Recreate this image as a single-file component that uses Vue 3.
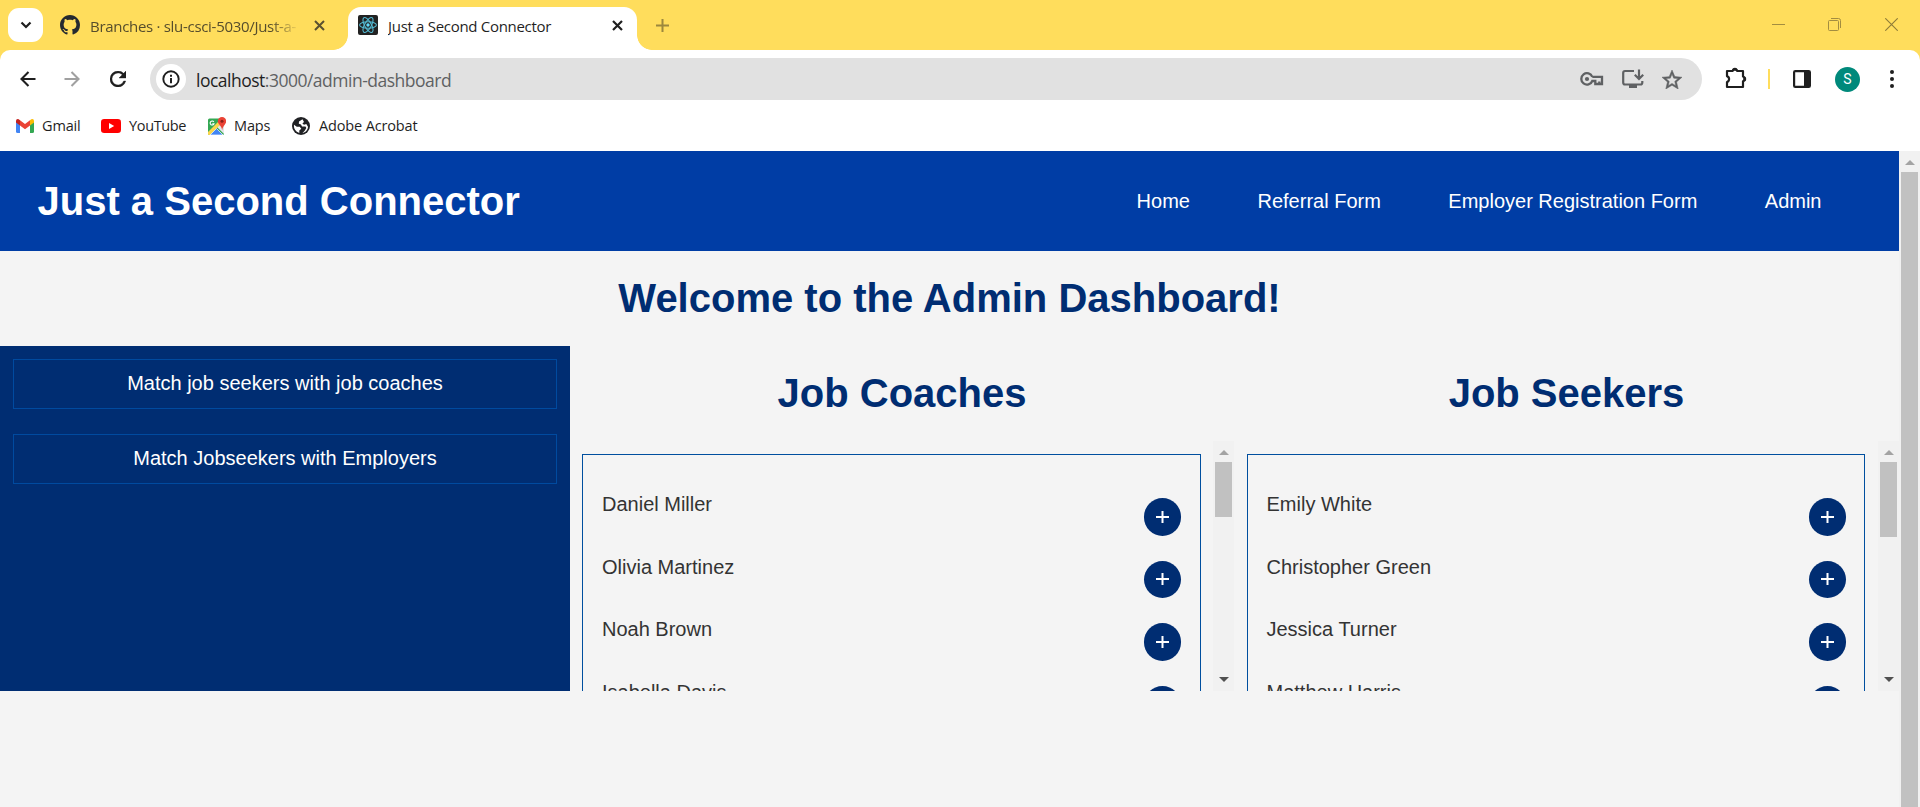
<script setup>
const navLinks = ['Home', 'Referral Form', 'Employer Registration Form', 'Admin']
const actions = ['Match job seekers with job coaches', 'Match Jobseekers with Employers']
const panels = [
  { title: 'Job Coaches', kind: 'coaches', people: ['Daniel Miller', 'Olivia Martinez', 'Noah Brown', 'Isabella Davis'] },
  { title: 'Job Seekers', kind: 'seekers', people: ['Emily White', 'Christopher Green', 'Jessica Turner', 'Matthew Harris'] },
]
</script>

<template>
  <div class="window">
    <div class="tabstrip">
      <div class="tabsearch">
        <svg width="12" height="8" viewBox="0 0 12 8"><path d="M1.5 1.5 6 6l4.5-4.5" fill="none" stroke="#1f1f1f" stroke-width="2.2" /></svg>
      </div>
      <div class="tab">
        <svg width="20" height="20" viewBox="0 0 16 16"><path fill="#24292f" d="M8 0C3.58 0 0 3.58 0 8c0 3.54 2.29 6.53 5.47 7.59.4.07.55-.17.55-.38 0-.19-.01-.82-.01-1.49-2.01.37-2.53-.49-2.69-.94-.09-.23-.48-.94-.82-1.13-.28-.15-.68-.52-.01-.53.63-.01 1.08.58 1.23.82.72 1.21 1.87.87 2.33.66.07-.52.28-.87.51-1.07-1.78-.2-3.64-.89-3.64-3.95 0-.87.31-1.59.82-2.15-.08-.2-.36-1.02.08-2.12 0 0 .67-.21 2.2.82.64-.18 1.32-.27 2-.27s1.36.09 2 .27c1.53-1.04 2.2-.82 2.2-.82.44 1.1.16 1.92.08 2.12.51.56.82 1.27.82 2.15 0 3.07-1.87 3.75-3.65 3.95.29.25.54.73.54 1.48 0 1.07-.01 1.93-.01 2.2 0 .21.15.46.55.38A8.01 8.01 0 0 0 16 8c0-4.42-3.58-8-8-8z" /></svg>
        <span class="tab-title faded">Branches · slu-csci-5030/Just-a-</span>
        <svg class="x" width="11" height="11" viewBox="0 0 11 11"><path d="m1 1 9 9M10 1l-9 9" stroke="#5b5130" stroke-width="2" /></svg>
      </div>
      <div class="tab active">
        <svg width="20" height="20" viewBox="0 0 20 20">
          <rect width="20" height="20" rx="2" fill="#222" />
          <g fill="none" stroke="#53b9d1" stroke-width="1.1">
            <ellipse cx="10" cy="10" rx="8.4" ry="3.3" />
            <ellipse cx="10" cy="10" rx="8.4" ry="3.3" transform="rotate(60 10 10)" />
            <ellipse cx="10" cy="10" rx="8.4" ry="3.3" transform="rotate(120 10 10)" />
          </g>
          <circle cx="10" cy="10" r="1.7" fill="#61dafb" />
        </svg>
        <span class="tab-title">Just a Second Connector</span>
        <svg class="x" width="11" height="11" viewBox="0 0 11 11"><path d="m1 1 9 9M10 1l-9 9" stroke="#1f1f1f" stroke-width="2.2" /></svg>
      </div>
      <svg class="newtab" width="13" height="13" viewBox="0 0 13 13"><path d="M6.5 0v13M0 6.5h13" stroke="#9c883d" stroke-width="2" /></svg>
      <div class="controls">
        <svg width="13" height="13" viewBox="0 0 13 13"><path d="M0 6.5h13" stroke="#a38d40" /></svg>
        <svg width="13" height="13" viewBox="0 0 13 13" fill="none" stroke="#a38d40"><rect x=".5" y="2.5" width="10" height="10" rx="1" /><path d="M3 .5h7.5a2 2 0 0 1 2 2V10" /></svg>
        <svg width="13" height="13" viewBox="0 0 13 13"><path d="m.3.3 12.4 12.4M12.7.3.3 12.7" stroke="#8e7b38" stroke-width="1.1" /></svg>
      </div>
    </div>

    <div class="chrome">
      <div class="toolbar">
        <svg class="back" width="16" height="16" viewBox="0 0 16 16"><path d="M15.5 8H1.8M8.5 1 1.5 8l7 7" fill="none" stroke="#1f1f1f" stroke-width="2.1" /></svg>
        <svg class="fwd" width="16" height="16" viewBox="0 0 16 16"><path d="M.5 8h13.7M7.5 1l7 7-7 7" fill="none" stroke="#a0a0a0" stroke-width="2.1" /></svg>
        <svg class="reload" width="16" height="16" viewBox="4 4 16 16"><path fill="#1f1f1f" stroke="#1f1f1f" stroke-width=".4" d="M17.650 6.350A7.960 7.960 0 0 0 12 4a8 8 0 1 0 7.730 10h-2.080A6 6 0 1 1 12 6c1.660 0 3.140.69 4.220 1.780L13 11h7V4z" /></svg>
        <div class="omnibox">
          <div class="info">
            <svg width="18" height="18" viewBox="0 0 18 18"><circle cx="9" cy="9" r="7.7" fill="none" stroke="#1f1f1f" stroke-width="1.9" /><path d="M9 8v5.2M9 4.7v2" stroke="#1f1f1f" stroke-width="2" /></svg>
          </div>
          <span class="url"><b>localhost</b>:3000/admin-dashboard</span>
          <div class="omni-icons">
            <svg width="24" height="14" viewBox="0 0 24 14" fill="none" stroke="#5f6163" stroke-width="2.3"><path d="M12.3 4.8A5.7 5.7 0 1 0 12.3 9H15.3V12h4V9.5M12.3 4.8H22V12h-3" /><circle cx="7" cy="7" r="2.1" fill="#5f6163" stroke="none" /></svg>
            <svg width="22" height="20" viewBox="0 0 22 20" fill="none" stroke="#5f6163" stroke-width="2.2"><path d="M12 2H3Q1.2 2 1.2 4v9.500Q1.200 15.500 3 15.500H18.500Q20.300 15.500 20.300 13.500V12M17 .5v9M12.800 5.800 17 10l4.200-4.200" /><path d="M7 16h8v3H7z" fill="#5f6163" stroke="none" /></svg>
            <svg width="20" height="19" viewBox="2 2 20 19"><path fill="#5f6163" stroke="#5f6163" stroke-width=".5" d="m22 9.240-7.190-.62L12 2 9.190 8.630 2 9.240l5.460 4.730L5.820 21 12 17.270 18.180 21l-1.630-7.030L22 9.240zM12 15.400l-3.760 2.270 1-4.280-3.320-2.880 4.380-.38L12 6.100l1.710 4.040 4.380.38-3.320 2.880 1 4.280L12 15.400z" /></svg>
          </div>
        </div>
        <svg class="puzzle" width="22" height="22" viewBox="0 0 22 22"><path d="M2 4h5.500a2.600 2.600 0 0 1 4.800 0H18v5.500a2.600 2.600 0 0 1 0 4.800V20H2v-4.900a3.200 3.200 0 0 0 0-6z" fill="none" stroke="#1f1f1f" stroke-width="2.200" stroke-linejoin="round" /><path d="M7.200 3.500a2.700 2.700 0 0 1 5.400 0zM18.500 9.300a2.700 2.700 0 0 1 0 5.400z" fill="#1f1f1f" /></svg>
        <i class="divider"></i>
        <svg class="side" width="18" height="18" viewBox="0 0 18 18"><rect x="1.100" y="1.100" width="15.800" height="15.800" rx="1.200" fill="none" stroke="#1f1f1f" stroke-width="2.200" /><path d="M11 1h6v16h-6z" fill="#1f1f1f" /></svg>
        <div class="avatar">S</div>
        <svg class="dots" width="4" height="18" viewBox="0 0 4 18" fill="#1f1f1f"><circle cx="2" cy="2" r="2" /><circle cx="2" cy="9" r="2" /><circle cx="2" cy="16" r="2" /></svg>
      </div>
      <div class="bookmarks">
        <span class="bm gmail">
          <svg width="18" height="14" viewBox="0 0 18 14"><path d="M0 2.500V12.500Q0 14 1.500 14H4V5z" fill="#4285f4" /><path d="M18 2.500V12.500Q18 14 16.500 14H14V5z" fill="#34a853" /><path d="M14 1.200V6.500L18 3.500V2Q18 0 16.300 0 15.500 0 14 1.200z" fill="#fbbc04" /><path d="M0 2Q0 0 1.700 0 2.500 0 4 1.200V6.500L0 3.500z" fill="#c5221f" /><path d="M4 1.200 9 5l5-3.800v5.300L9 10.200 4 6.500z" fill="#ea4335" /></svg>
          <span>Gmail</span>
        </span>
        <span class="bm youtube">
          <svg width="20" height="14" viewBox="0 0 20 14"><rect width="20" height="14" rx="3.200" fill="#f00" /><path d="m8 4 5.200 3L8 10z" fill="#fff" /></svg>
          <span>YouTube</span>
        </span>
        <span class="bm maps">
          <svg width="18" height="18" viewBox="0 0 18 18"><rect y="1.500" width="16" height="16.500" rx="1.500" fill="#34a853" /><path d="M16 5v12L9 10z" fill="#e4e6e8" /><path d="M0 15 12 3l3 2L1.800 18H1Q0 18 0 17z" fill="#fbd54b" /><path d="m8.500 11.500 6.500 6.500H2z" fill="#4285f4" stroke="#fff" stroke-width=".7" /><path d="M5.800 4.900A2 2 0 1 0 6 6.800H4.300" fill="none" stroke="#fff" stroke-width="1.100" /><path d="M14 0a4.200 4.200 0 0 1 4.200 4.200c0 3-3.500 4.300-4 9-.5-4.700-4.400-6-4.400-9A4.200 4.200 0 0 1 14 0z" fill="#ea4335" /><circle cx="14" cy="4.200" r="1.500" fill="#8c1f17" /></svg>
          <span>Maps</span>
        </span>
        <span class="bm adobe">
          <svg width="18" height="18" viewBox="0 0 18 18"><circle cx="9" cy="9" r="9" fill="#202124" /><path d="M10.500 2.200 7 4.500 6.800 6.700 9 7.500l1 2h3.500l.8 1.500-1.600 2.700-2.200 2.300c2.800-.4 5.400-3 5.500-6.300L14.300 7l-2.300.8-1.600-1.300 1.600-1.400zM2 7.800c-.5 3.800 1.700 7 5.300 8.100V13.500l2-1.800-1.600-1.900H4.800z" fill="#fff" /></svg>
          <span>Adobe Acrobat</span>
        </span>
      </div>
    </div>

    <div class="viewport">
      <div class="page">
        <header class="header">
          <h1>Just a Second Connector</h1>
          <nav><a v-for="l in navLinks" :key="l">{{ l }}</a></nav>
        </header>
        <h1 class="welcome">Welcome to the Admin Dashboard!</h1>
        <main class="dashboard">
          <aside>
            <div v-for="a in actions" :key="a" class="action">{{ a }}</div>
          </aside>
          <section v-for="p in panels" :key="p.kind" class="panel" :class="p.kind">
            <h1>{{ p.title }}</h1>
            <div class="scroller">
              <div class="list">
                <div v-for="n in p.people" :key="n" class="person">
                  <span>{{ n }}</span>
                  <button type="button"><svg width="13" height="12" viewBox="0 0 13 12"><path d="M6.500 0v12M0 6h13" stroke="#fff" stroke-width="2" /></svg></button>
                </div>
              </div>
              <div class="scrollbar"><i class="up"></i><i class="thumb"></i><i class="down"></i></div>
            </div>
          </section>
        </main>
      </div>
      <div class="scrollbar main-bar"><i class="up"></i><i class="thumb"></i></div>
    </div>
  </div>
</template>

<style>
body { margin: 0; overflow: hidden; }
</style>

<style scoped>
* { box-sizing: border-box; }
svg { display: block; flex: none; }
.window { width: 1920px; height: 807px; display: flex; flex-direction: column; overflow: hidden; background: #ffdd5c; font-family: "Open Sans", "Noto Sans", sans-serif; }

.tabstrip { height: 50px; flex: none; display: flex; align-items: flex-start; }
.tabsearch { width: 35px; height: 34px; margin: 8px 0 0 8px; border-radius: 11px; background: #fff; display: flex; align-items: center; justify-content: center; }
.tab { display: flex; align-items: center; height: 36px; margin-top: 7px; width: 288px; margin-left: 7px; padding-left: 10px; font-size: 15px; color: #564d2c; }
.tab-title { width: 210px; margin-left: 10px; padding-top: 1px; white-space: nowrap; overflow: hidden; letter-spacing: -0.3px; line-height: 22px; }
.faded { -webkit-mask-image: linear-gradient(90deg, #000 86%, transparent 100%); mask-image: linear-gradient(90deg, #000 86%, transparent 100%); }
.x { margin-left: 14px; }
.tab.active { position: relative; width: 289px; height: 43px; margin-left: 10px; padding-bottom: 7px; background: #fff; border-radius: 13px 13px 0 0; color: #1f1f1f; }
.tab.active .tab-title { width: 225px; margin-left: 10px; }
.tab.active .x { margin-left: -1px; }
.tab.active::before, .tab.active::after { content: ""; position: absolute; bottom: 0; width: 15px; height: 15px; }
.tab.active::before { left: -15px; background: radial-gradient(circle at 0 0, transparent 14.5px, #fff 15.2px); }
.tab.active::after { right: -15px; background: radial-gradient(circle at 100% 0, transparent 14.5px, #fff 15.2px); }
.newtab { margin: 19px 0 0 19px; }
.controls { display: flex; gap: 44px; margin: 18px 22px 0 auto; }
.controls svg:first-child { margin-right: -1px; }

.chrome { height: 101px; flex: none; background: #fff; border-radius: 10px 10px 0 0; }
.toolbar { display: flex; align-items: center; height: 58px; }
.back { margin-left: 20px; }
.fwd { margin-left: 28px; }
.reload { margin-left: 30px; }
.omnibox { width: 1552px; height: 42px; margin-left: 24px; border-radius: 21px; background: #e1e1e1; display: flex; align-items: center; padding: 0 20px 0 6px; }
.info { width: 30px; height: 30px; border-radius: 50%; background: #fff; display: flex; align-items: center; justify-content: center; }
.url { margin-left: 10px; padding-top: 1px; font-size: 17.5px; letter-spacing: -0.5px; line-height: 26px; color: #5f6163; white-space: nowrap; }
.url b { font-weight: 400; color: #1f1f1f; }
.omni-icons { margin-left: auto; display: flex; align-items: center; gap: 18px; }
.puzzle { margin: -3px 0 0 23px; }
.divider { width: 2px; height: 20px; margin-left: 21px; background: #ffdd5c; }
.side { margin-left: 23px; }
.avatar { width: 25px; height: 25px; margin-left: 24px; border-radius: 50%; background: #00897b; color: #fff; font: 14px/25px Roboto, sans-serif; text-align: center; }
.dots { margin-left: 30px; }
.bookmarks { display: flex; align-items: center; height: 36px; font-size: 14.5px; line-height: 20px; color: #1f1f1f; }
.bm { display: flex; align-items: center; white-space: nowrap; }
.bm span { letter-spacing: -0.15px; }
.gmail { margin-left: 16px; width: 85px; gap: 8px; }
.youtube { width: 107px; gap: 8px; }
.youtube span { letter-spacing: -0.35px; }
.maps { width: 84px; gap: 8px; }
.adobe { gap: 9px; }

.viewport { flex: 1; display: flex; min-height: 0; background: #f4f4f4; font-family: "Liberation Sans", Arial, sans-serif; font-size: 20px; }
.page { width: 1899px; }
h1 { margin: 0; font-size: 40px; font-weight: 700; line-height: 46px; letter-spacing: 0; }
.header { height: 100px; display: flex; align-items: center; justify-content: space-between; padding: 0 77.500px 0 37.5px; background: #003da5; color: #fff; }
nav { display: flex; gap: 67.5px; line-height: 23px; }
.welcome { padding: 24px 0 25px; text-align: center; color: #002d72; }
.dashboard { display: grid; grid-template-columns: 570px 664px 665px; height: 345px; }
aside { background: #002d72; padding: 13px 13px 0; display: flex; flex-direction: column; gap: 25px; }
.action { height: 50px; border: 1px solid #004a9f; color: #fff; text-align: center; line-height: 23px; padding-top: 12px; }
.panel { min-width: 0; }
.panel h1 { color: #002d72; text-align: center; padding: 24px 0 25px; }
.scroller { display: flex; justify-content: space-between; height: 250px; overflow: hidden; padding-left: 12px; }
.seekers .scroller { padding-left: 13px; }
.list { width: 619px; height: 400px; margin-top: 13px; border: 1px solid #004f9f; padding: 31px 19px 0 19px; color: #333; }
.seekers .list { width: 618px; padding-left: 18.500px; padding-right: 18px; }
.person { height: 62.5px; display: flex; justify-content: space-between; line-height: 23px; padding-top: 7px; }
.person button { width: 37.5px; height: 37.5px; margin-top: 5px; padding: 0; border: 0; border-radius: 50%; background: #002d72; display: flex; align-items: center; justify-content: center; }

.scrollbar { width: 21px; flex: none; background: #f1f1f1; display: flex; flex-direction: column; align-items: center; }
.up { width: 0; height: 0; margin-top: 9px; border: 5px solid transparent; border-top: 0; border-bottom-color: #a3a3a3; }
.down { width: 0; height: 0; margin: auto 0 9px; border: 5px solid transparent; border-bottom: 0; border-top-color: #505050; }
.thumb { width: 17px; height: 55px; margin-top: 7px; background: #c1c1c1; }
.seekers .thumb { height: 75px; }
.main-bar .thumb { height: auto; flex: 1; }
</style>
